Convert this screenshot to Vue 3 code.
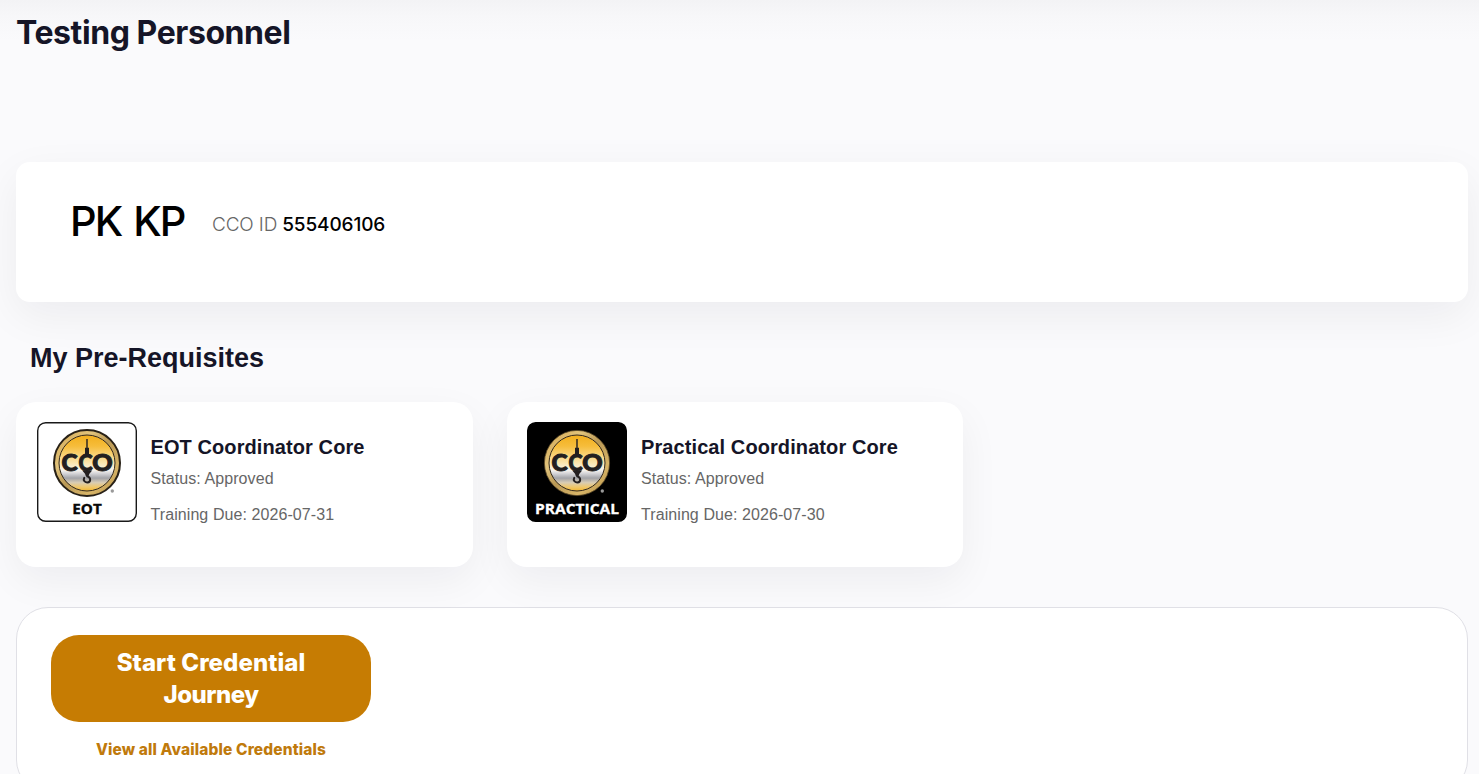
<script setup>
const prerequisites = [
  { id: 'eot', title: 'EOT Coordinator Core', due: '2026-07-31', label: 'EOT', dark: false, labelWidth: 29.5 },
  { id: 'practical', title: 'Practical Coordinator Core', due: '2026-07-30', label: 'PRACTICAL', dark: true, labelWidth: 84 },
]
</script>

<template>
  <main class="page">
    <h1 class="page-title"><span>Testing Personnel</span></h1>

    <section class="profile">
      <div class="name">PK KP</div>
      <div class="cco-id"><span class="id-label">CCO ID</span><span class="id-number">555406106</span></div>
    </section>

    <h2 class="section-title">My Pre-Requisites</h2>
    <section class="prereqs">
      <article v-for="item in prerequisites" :key="item.id" class="prereq">
        <svg class="badge" viewBox="0 0 100 100" :class="{ dark: item.dark }">
          <defs>
            <linearGradient :id="'gold-' + item.id" x1="0" y1="0" x2="0" y2="1">
              <stop offset="0" stop-color="#f2ae1c" />
              <stop offset=".2" stop-color="#f6bd3b" />
              <stop offset=".5" stop-color="#fbe6b0" />
              <stop offset=".63" stop-color="#f6f3ee" />
              <stop offset=".69" stop-color="#d3d3d6" />
              <stop offset=".77" stop-color="#a2a3a8" />
              <stop offset=".85" stop-color="#d8ccb4" />
              <stop offset=".93" stop-color="#f0c76a" />
              <stop offset="1" stop-color="#f2b52d" />
            </linearGradient>
            <linearGradient :id="'rim-' + item.id" x1="0" y1="0" x2="1" y2="1">
              <stop offset="0" stop-color="#d0a24a" />
              <stop offset=".3" stop-color="#e2c47c" />
              <stop offset=".5" stop-color="#b99855" />
              <stop offset=".75" stop-color="#d8b568" />
              <stop offset="1" stop-color="#b08b41" />
            </linearGradient>
          </defs>
          <rect class="frame" x=".7" y=".7" width="98.6" height="98.6" rx="8" />
          <circle class="rim" cx="50" cy="41" :r="item.dark ? 32.6 : 33" :fill="'url(#rim-' + item.id + ')'" />
          <circle cx="50" cy="41" r="28" :fill="'url(#gold-' + item.id + ')'" stroke="#33291d" stroke-width="1" />
          <path d="M49.3 17h1.4v8.7h1.3V35h-4v-9.3h1.3z" fill="#231f20" />
          <g class="mark">
            <text x="24.6" y="49" textLength="16" lengthAdjust="spacingAndGlyphs">C</text>
            <text x="41.6" y="49" textLength="14" lengthAdjust="spacingAndGlyphs">C</text>
            <text x="55.2" y="49" textLength="20.4" lengthAdjust="spacingAndGlyphs">O</text>
          </g>
          <path d="M45.2 48.5h10l-2.8 3.2-.8 2.3h-2.8l-.8-2.3z" fill="#231f20" />
          <path d="M50.2 53v1.2c4 1.2 3.9 6 .1 6.2-2.7.1-4.3-2.3-3.1-4.5" fill="none" stroke="#231f20" stroke-width="2" stroke-linecap="round" />
          <circle class="registered" cx="75.3" cy="69" r="1.7" />
          <text class="badge-label" x="50" y="92.2" text-anchor="middle" :textLength="item.labelWidth" lengthAdjust="spacingAndGlyphs">{{ item.label }}</text>
        </svg>
        <div class="details">
          <h3>{{ item.title }}</h3>
          <p>Status: Approved</p>
          <p>Training Due: {{ item.due }}</p>
        </div>
      </article>
    </section>

    <section class="journey">
      <div class="actions">
        <button class="start" type="button"><span class="line-one">Start Credential</span><span class="line-two">Journey</span></button>
        <a class="view-all">View all Available Credentials</a>
      </div>
    </section>
  </main>
</template>

<style>
html, body { margin: 0; background: #fafafc; overflow: hidden; }
</style>

<style scoped>
* { box-sizing: border-box; }
.page {
  height: 774px;
  overflow: hidden;
  padding: 0 11px 0 16px;
  color: #151527;
  font-family: "Liberation Sans", Arial, sans-serif;
  background: linear-gradient(#f3f3f5 0, #f7f7f9 16px, #fafafc 40px);
}
.page-title {
  height: 162px;
  margin: 0;
  padding-top: 13px;
  font: 750 32px/40px Inter, sans-serif;
  letter-spacing: -.42px;
}
.profile {
  display: flex;
  height: 140px;
  padding: 38px 55px 0 54px;
  border-radius: 14px;
  background: #fff;
  box-shadow: 0 14px 44px rgba(20, 20, 35, .06);
  font-family: Inter, sans-serif;
  color: #000;
}
.name { width: 142px; font-size: 41.5px; line-height: 43px; font-weight: 500; letter-spacing: -2px; word-spacing: 3px; white-space: nowrap; }
.cco-id { display: flex; gap: 5px; padding-top: 14px; font-size: 19px; line-height: 22px; }
.id-label { color: #666; letter-spacing: -.15px; font-weight: 350; }
.id-number { font-weight: 500; letter-spacing: -.12px; }
.section-title { margin: 38px 0 0 14px; font-size: 27px; line-height: 36px; font-weight: 700; }
.prereqs { display: flex; gap: 34px; margin-top: 26px; }
.prereq {
  display: flex;
  width: 456.5px;
  height: 165px;
  padding: 20px 20.5px;
  border-radius: 20px;
  background: #fff;
  box-shadow: 0 14px 40px rgba(20, 20, 35, .055);
}
.badge { flex: none; width: 100px; height: 100px; }
.frame { fill: #fff; stroke: #191919; stroke-width: 1.4; }
.rim { stroke: #282117; stroke-width: 2; }
.mark { font: 900 22.5px Lato, sans-serif; fill: #231f20; stroke: #231f20; stroke-width: 1; }
.registered { fill: #999; }
.badge-label { font: 700 14px "Open Sans", sans-serif; fill: #080808; stroke: #080808; stroke-width: .3; }
.dark .frame { fill: #000; stroke: #000; }
.dark .rim { stroke: #594827; stroke-width: .8; }
.dark .badge-label { fill: #fff; stroke: #fff; }
.details { padding: 12px 0 0 14px; }
h3 { margin: 0; font-size: 20px; line-height: 26px; letter-spacing: .09px; white-space: nowrap; }
p { margin: 7px 0 0; color: #666; font-size: 16px; line-height: 24px; letter-spacing: .08px; }
p + p { margin-top: 12px; }
.journey { height: 185px; margin-top: 40px; padding: 27px 34px; border: 1px solid #e0e0e6; border-radius: 32px; background: #fff; }
.actions { display: flex; flex-direction: column; align-items: center; width: 320px; font-family: Inter, sans-serif; }
.start {
  display: flex;
  flex-direction: column;
  align-items: center;
  width: 320px;
  height: 87px;
  padding: 12px 0 0;
  border: 0;
  border-radius: 28px;
  background: #c67c03;
  color: #fff;
  font: 800 24px/32px Inter, sans-serif;
}
.line-one { letter-spacing: .05px; }
.line-two { letter-spacing: -.5px; }
.view-all { margin-top: 18px; color: #c07a0c; font-size: 15.5px; line-height: 20px; font-weight: 800; letter-spacing: .12px; }
</style>
